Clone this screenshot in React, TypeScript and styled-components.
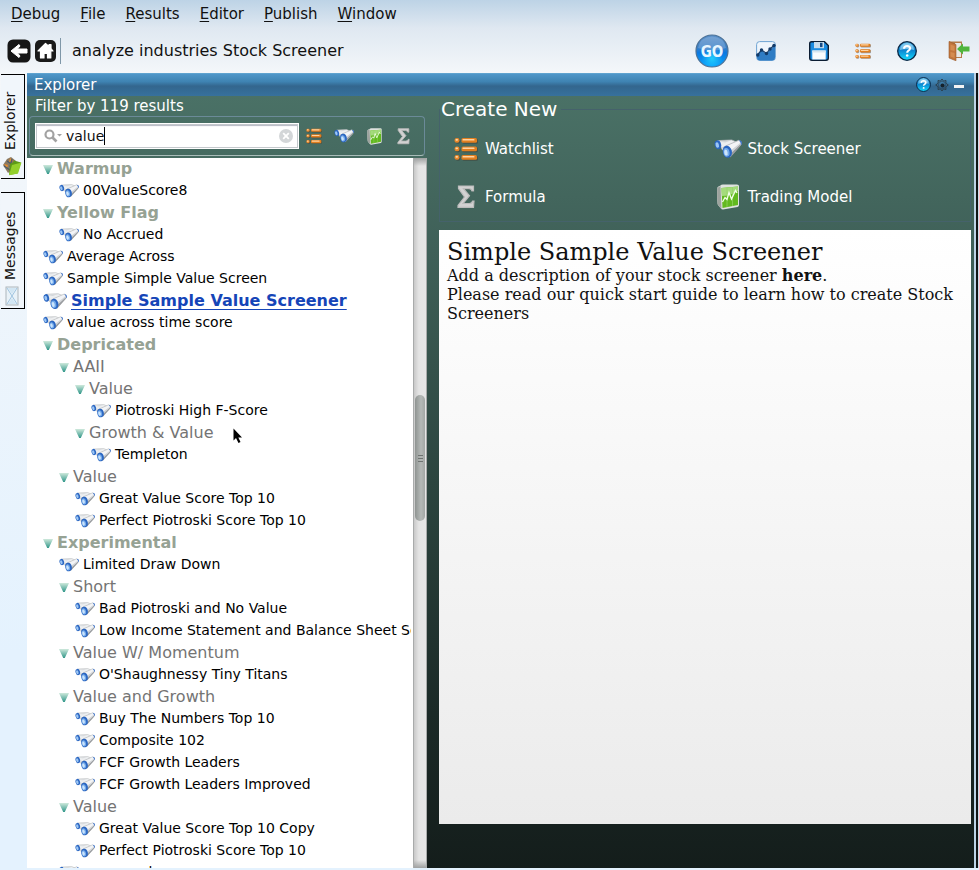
import React, { useState } from "react";
import styled, { createGlobalStyle, css } from "styled-components";

const GlobalStyle = createGlobalStyle`
  *, *::before, *::after { box-sizing: border-box; }
  html, body, #root { height: 100%; margin: 0; }
  body { font-family: "DejaVu Sans", sans-serif; font-size: 14px; color: #111; overflow: hidden; }
  button, input { font: inherit; color: inherit; }
`;

/* ---------- icons ---------- */

const Binoculars = ({ size = 20 }: { size?: number }) => (
  <svg width={size} height={Math.round(size * 0.7)} viewBox="0 0 30 21" aria-hidden="true">
    <path d="M4 1.500 L19 .8 L24 3 L9 11.500 Z" fill="#eceef0" stroke="#b4b7ba" strokeWidth=".8" />
    <path d="M9 8.500 L22 3.500 L24 4.500 L10 12 Z" fill="#b4b7ba" />
    <path d="M5 2.500 L18 1.500 L12 3.500Z" fill="#d3d6d9" />
    <ellipse cx="4.200" cy="6" rx="3.400" ry="4.800" transform="rotate(-14 4.200 6)" fill="#2a66c2" />
    <ellipse cx="3.500" cy="6.300" rx="1.800" ry="3" transform="rotate(-14 3.500 6.300)" fill="#9cc6f4" />
    <path d="M12 7.500 L26.500 1.200 Q30 1.800 29 6 L17 19 Z" fill="#f3f4f6" stroke="#b0b3b6" strokeWidth=".8" />
    <path d="M17.500 15 L28.500 5 L28.500 7 L17.500 19.500 Z" fill="#999c9f" />
    <path d="M17.500 12.500 L28 4 L28.500 5.200 L18 15 Z" fill="#d0d3d6" />
    <path d="M26.500 1 Q31 1.200 29.500 6 L28.700 6.500 Q29.400 3.500 26.500 1Z" fill="#3a72cc" />
    <ellipse cx="14.300" cy="13.500" rx="4.900" ry="6.500" transform="rotate(-12 14.300 13.500)" fill="#2a66c2" />
    <ellipse cx="13.400" cy="14" rx="3.200" ry="4.700" transform="rotate(-12 13.400 14)" fill="#74aaea" />
    <ellipse cx="12.800" cy="14.300" rx="1.800" ry="3.200" transform="rotate(-12 12.800 14.300)" fill="#cbe4fb" />
  </svg>
);

const ListIcon = ({ size = 16 }: { size?: number }) => (
  <svg width={size} height={size} viewBox="0 0 24 24" aria-hidden="true">
    {[1, 9.5, 18].map((y) => (
      <g key={y}>
        <rect x="1.500" y={y + 0.8} width="5" height="5" rx="2.200" fill="#40342a" opacity=".45" />
        <rect x="8.500" y={y + 0.8} width="15.500" height="5" rx="1.500" fill="#40342a" opacity=".45" />
        <rect x="0.500" y={y} width="5" height="4.800" rx="2.200" fill="#e8862a" />
        <rect x="7.500" y={y} width="15.500" height="4.800" rx="1.500" fill="#e17f20" />
        <rect x="1.500" y={y + 0.9} width="2.500" height="1.800" rx=".9" fill="#ffd9a4" />
        <rect x="8.500" y={y + 0.9} width="12" height="1.700" rx=".7" fill="#ffd3a0" />
      </g>
    ))}
  </svg>
);

const SigmaIcon = ({ size = 16 }: { size?: number }) => (
  <svg width={size} height={size} viewBox="0 0 24 24" aria-hidden="true">
    <path d="M5 2 H20 V7 H18.500 Q18 4.500 15.500 4.500 H9.500 L15.500 11.500 L9 19.500 H16 Q18.500 19.500 19.200 17 H20.500 L19.500 23 H4.500 V21 L11.500 12.800 L5 4.500 Z" fill="#33433e" opacity=".5" />
    <path d="M4.500 1 H19.500 V6 H18 Q17.500 3.700 15 3.700 H9.500 L15.500 10.800 L9 18.500 H15.500 Q18 18.500 18.700 16 H20 L19.500 22.300 H4 V20.500 L10.500 12 L4.500 3.500 Z" fill="#d2d2d2" stroke="#bcbcbc" strokeWidth="1.200" />
  </svg>
);

const ModelIcon = ({ size = 18 }: { size?: number }) => (
  <svg width={size} height={size} viewBox="0 0 24 26" aria-hidden="true">
    <path d="M4.500 1.500 Q5 .5 7 .5 L21 .5 Q23 .5 23 2 V21 Q23 22.500 21.500 23 L7 25.500 Q5.500 25.500 4.500 24 L2 21 Q1 20 1.200 4 Q1.200 2.500 4.500 1.500Z" fill="#dfe2df" />
    <path d="M1.200 4 L4.500 2 L5.500 25 L2 21 Q1 20 1.200 4Z" fill="#9da39e" />
    <path d="M5.500 4 L22 2.500 V21 L6.500 24 Z" fill="#62b91f" />
    <path d="M5.500 4 L22 2.500 V7 Q14 12 5.800 12Z" fill="#a4db7c" />
    <path d="M11 3.500V23 M16.500 3V22" stroke="#95d568" strokeWidth=".7" />
    <path d="M6.500 18 L9 13.500 L11 15.500 L13 8.500 L15.500 15 L19.500 6.500 L21 9" fill="none" stroke="#f2ffe8" strokeWidth="1.300" />
  </svg>
);

const HelpIcon = ({ size = 20 }: { size?: number }) => (
  <svg width={size} height={size} viewBox="0 0 20 20" aria-hidden="true">
    <defs>
      <linearGradient id="helpFill" x1="0" y1="0" x2="0" y2="1">
        <stop offset="0" stopColor="#59bdee" />
        <stop offset="0.45" stopColor="#0d84cf" />
        <stop offset="1" stopColor="#12dcff" />
      </linearGradient>
    </defs>
    <circle cx="10" cy="10" r="9.300" fill="url(#helpFill)" stroke="#0b2745" strokeWidth="1.300" />
    <path d="M2.800 9 Q3.500 2.500 10 2 Q16.500 2.500 17.200 9 Q10 7 2.800 9Z" fill="#b9e3f8" opacity=".55" />
    <path d="M7 7.800 Q7.200 5 10.100 5 Q13.100 5.100 13.100 7.500 Q13 9 11.200 9.800 Q10.200 10.400 10.200 11.800" fill="none" stroke="#fff" strokeWidth="2.100" />
    <circle cx="10.200" cy="14.500" r="1.300" fill="#fff" />
  </svg>
);

const GoIcon = () => (
  <svg width="34" height="34" viewBox="0 0 34 34" aria-hidden="true">
    <defs>
      <linearGradient id="goFill" x1="0" y1="0" x2="0" y2="1">
        <stop offset="0" stopColor="#5a8fc8" />
        <stop offset="0.4" stopColor="#3a7fc6" />
        <stop offset="0.55" stopColor="#0b78e0" />
        <stop offset="1" stopColor="#0aa6ff" />
      </linearGradient>
      <radialGradient id="goGlow" cx="0.5" cy="0.75" r="0.35">
        <stop offset="0" stopColor="#22d4ff" stopOpacity=".9" />
        <stop offset="1" stopColor="#22d4ff" stopOpacity="0" />
      </radialGradient>
    </defs>
    <circle cx="17" cy="17" r="16" fill="url(#goFill)" stroke="#4c7196" strokeWidth="1.200" />
    <circle cx="17" cy="17" r="15" fill="url(#goGlow)" />
    <path d="M3 14 Q5 3 17 2.500 Q29 3 31 14 Q17 19 3 14Z" fill="#fff" opacity=".18" />
    <text x="17" y="23" textAnchor="middle" fontFamily="DejaVu Sans Condensed, DejaVu Sans, sans-serif" fontWeight="700" fontSize="15" fill="#e8f6ff">GO</text>
  </svg>
);

const LineChartIcon = () => (
  <svg width="20" height="20" viewBox="0 0 20 20" aria-hidden="true">
    <rect x=".6" y=".6" width="18.800" height="18.800" rx="3" fill="#eef5fc" stroke="#6ea3d2" />
    <path d="M1 14 L5.500 9 L10 13 L18.500 4.500 L19 5 V17 Q19 19.400 16.500 19.400 H3.500 Q1 19.400 1 17Z" fill="#2f7cc4" />
    <path d="M1 14.500 L5.500 9 L10.500 12.500 L14 8 L18.500 4" fill="none" stroke="#173e6c" strokeWidth="1.200" />
    {[[5.5, 9], [10.5, 12.5], [14, 8], [18, 4.5], [1.8, 14]].map(([x, y]) => (
      <circle key={x} cx={x} cy={y} r="1.700" fill="#123a68" />
    ))}
  </svg>
);

const SaveIcon = () => (
  <svg width="20" height="20" viewBox="0 0 20 20" aria-hidden="true">
    <path d="M2.500 .7 H15.500 L19.300 4.500 V17 Q19.300 19.300 17 19.300 H3 Q.7 19.300 .7 17 V2.700 Q.7 .7 2.500 .7Z" fill="#1a8be0" stroke="#0b1d33" strokeWidth="1.400" />
    <rect x="5" y="1" width="10" height="6.200" fill="#c6dcec" />
    <rect x="11" y="1.800" width="2.500" height="4.300" fill="#174a83" />
    <rect x="3.300" y="9.500" width="13.400" height="9" fill="#f8fbfd" />
    <path d="M3.300 9.500 H16.700 V11.500 H3.300Z" fill="#d5e4ee" />
  </svg>
);

const ExitIcon = () => (
  <svg width="22" height="20" viewBox="0 0 22 20" aria-hidden="true">
    <path d="M1 .5 H14 V17 H1Z" fill="#b47b49" />
    <path d="M7 2 H13 V16 H7Z" fill="#e8e8e4" />
    <path d="M1 .5 L8 3.500 V19.800 L1 17Z" fill="#c2763c" stroke="#9a5a2b" strokeWidth=".6" />
    <path d="M2.500 3.500 L6.500 5 V10 L2.500 9Z M2.500 11 L6.500 12 V17 L2.500 15.500Z" fill="#d48c50" />
    <path d="M9 8 L15 2.500 V5.500 H21.500 V10.500 H15 V13.500Z" fill="#4fb53c" />
  </svg>
);

const BackIcon = () => (
  <svg width="24" height="24" viewBox="0 0 24 24" aria-hidden="true">
    <rect x=".5" y=".5" width="23" height="23" rx="5.500" fill="#161616" />
    <path d="M4 12 L12 5.500 L13 7 L10.500 10 H20 V14 H10.500 L13 17 L12 18.500Z" fill="#fff" stroke="#fff" strokeLinejoin="round" />
  </svg>
);

const HomeIcon = () => (
  <svg width="21" height="22" viewBox="0 0 21 22" aria-hidden="true">
    <rect width="21" height="22" rx="5" fill="#1a1a1a" />
    <path d="M10.500 3.500 L14 6.500 V4.500 H16 V8.500 L18 11 H15.800 V18 H12.500 V13.500 H9 V18 H5.500 V11 H3Z" fill="#fff" stroke="#fff" strokeLinejoin="round" strokeWidth="1.200" />
  </svg>
);

const GearIcon = () => (
  <svg width="14" height="14" viewBox="0 0 14 14" aria-hidden="true">
    <path d="M7 1 L8.500 3.200 L11 2.500 L10.800 5.200 L13.300 7 L10.800 8.800 L11 11.500 L8.500 10.800 L7 13 L5.500 10.800 L3 11.500 L3.200 8.800 L.7 7 L3.200 5.200 L3 2.500 L5.500 3.200Z" fill="none" stroke="#2b3f4c" strokeWidth="1" />
    <circle cx="7" cy="7" r="3.600" fill="none" stroke="#2d4150" strokeWidth=".6" />
    <circle cx="7.500" cy="7.500" r="2" fill="#16222b" />
  </svg>
);

const Triangle = () => (
  <svg width="10" height="9" viewBox="0 0 10 9" aria-hidden="true">
    <defs>
      <linearGradient id="tri" x1="0" y1="0" x2="0" y2="1">
        <stop offset="0" stopColor="#cfe9dc" />
        <stop offset="1" stopColor="#2f9688" />
      </linearGradient>
    </defs>
    <path d="M0 0 H10 L5.800 9 H4.200Z" fill="url(#tri)" />
  </svg>
);

const SearchIcon = () => (
  <svg width="19" height="14" viewBox="0 0 19 14" aria-hidden="true">
    <circle cx="5.500" cy="5.500" r="4" fill="none" stroke="#a2a2a2" strokeWidth="2.200" />
    <path d="M8.500 8.500 L12.500 12.500" stroke="#a2a2a2" strokeWidth="2.600" />
    <path d="M13 5 H18 L15.500 7.500Z" fill="#a2a2a2" />
  </svg>
);

const ClearIcon = () => (
  <svg width="14" height="14" viewBox="0 0 14 14" aria-hidden="true">
    <circle cx="7" cy="7" r="7" fill="#d3d6d8" />
    <path d="M4.200 4.200 L9.800 9.800 M9.800 4.200 L4.200 9.800" stroke="#fff" strokeWidth="1.800" />
  </svg>
);

const ExplorerTabIcon = () => (
  <svg width="20" height="20" viewBox="0 0 20 20" aria-hidden="true">
    <path d="M1 9 L5 3 L9 1 L14 5 L12 12 L6 17Z" fill="#8b7a62" />
    <path d="M2 8 L6 9 L5 12Z M8 2 L11 5 L7 6Z" fill="#e98c2c" />
    <path d="M5 5 L9 8 M2 10 L8 14 M10 3 L8 11" stroke="#4f5d68" strokeWidth="1.300" />
    <path d="M8 8 Q9 6.500 11 6.500 L12 4.500 L19 6.500 L15.500 17.500 L7 19Z" fill="#5d9a18" />
    <path d="M10 9 L19.500 6.500 L16 17.500 L7 19.200Z" fill="#93d02c" />
  </svg>
);

const MessagesTabIcon = () => (
  <svg width="14" height="20" viewBox="0 0 14 20" aria-hidden="true">
    <rect x="1" y="1" width="12" height="18" fill="#e9f2f8" stroke="#aeb6bb" />
    <path d="M2 2 L7 10 L2 18 M12 2 L7 10 L12 18" fill="none" stroke="#9fc4e0" />
    <path d="M3 2 H11 L7 8Z M3 18 H11 L7 12Z" fill="#d2e6f3" />
  </svg>
);

const Pointer = () => (
  <svg width="10" height="16" viewBox="0 0 10 16" aria-hidden="true">
    <path d="M.5 .5 V12.500 L3 10 L5.500 15 L7.500 14 L5.300 9.500 H9Z" fill="#000" />
  </svg>
);

/* ---------- window frame ---------- */

const Window = styled.div`
  display: grid;
  grid-template-rows: 28px 45px minmax(0, 1fr) 2px;
  height: 100vh;
  background: linear-gradient(#bdd3e6 0, #dfe8f1 28px, #f4f7fa 73px, #e4f2fe 75%);
`;

const MenuBar = styled.nav`
  display: flex;
  align-items: center;
  gap: 20px;
  padding-left: 11px;
`;

const MenuItem = styled.button`
  padding: 0;
  border: 0;
  background: none;
  font-size: 15px;
  line-height: 20px;
  &::first-letter { text-decoration: underline; text-underline-offset: 2px; }
`;

const Toolbar = styled.header`
  display: flex;
  align-items: center;
  gap: 4px;
  padding: 0 9px 0 7px;
`;

const Location = styled.h1`
  flex: 1;
  margin: 0;
  padding-left: 11px;
  font-size: 16px;
  font-weight: 400;
  line-height: 26px;
  border-left: 1px solid #7f97a8;
`;

const IconButton = styled.button`
  display: flex;
  align-items: center;
  justify-content: center;
  padding: 0;
  border: 0;
  background: none;
`;

const Actions = styled.div`
  display: flex;
  align-items: center;
  gap: 26px;
`;

const RunGroup = styled.div`
  display: flex;
  align-items: center;
  gap: 33px;
  margin-left: 1px;
`;

const Exit = styled(IconButton)`
  margin-left: 5px;
`;

const Body = styled.div`
  display: grid;
  grid-template-columns: 27px minmax(0, 1fr) 5px;
  min-height: 0;
`;

const Tabs = styled.div`
  display: flex;
  flex-direction: column;
  align-items: flex-start;
  gap: 13px;
  padding: 1px 0 0 1px;
`;

const SideTab = styled.button<{ $height: number }>`
  display: flex;
  align-items: center;
  gap: 6px;
  width: 24px;
  height: ${(p) => p.$height}px;
  padding: 2px 0;
  border: 1px solid #000;
  border-right: 0;
  background: #f1f6fb;
  writing-mode: vertical-rl;
  transform: rotate(180deg);
  font-size: 14px;
  svg { transform: rotate(180deg); flex: none; }
`;

const TabLabel = styled.span`
  padding-left: 6px;
`;

const WindowEdge = styled.div`
  border-left: 2px solid #bcd3e6;
  border-right: 1px solid #cddceb;
  background: #101414;
`;

const Panel = styled.main`
  display: grid;
  grid-template-rows: 23px minmax(0, 1fr);
  min-height: 0;
`;

const TitleBar = styled.div`
  display: flex;
  align-items: center;
  gap: 4px;
  padding: 0 10px 1px 7px;
  background: linear-gradient(#4f97c9, #3f83b2 35%, #33668e 55%, #37719d);
  border-top: 1px solid #5fa3cf;
  color: #fff;
`;

const Title = styled.h2`
  flex: 1;
  margin: 0;
  font-size: 15px;
  font-weight: 400;
`;

const Minimize = styled.button`
  width: 10px;
  height: 3px;
  margin: 4px 0 0 1px;
  padding: 0;
  border: 0;
  background: #f3f3f3;
`;

const Content = styled.div`
  display: grid;
  grid-template-columns: 400px minmax(0, 1fr);
  min-height: 0;
  background: linear-gradient(#4a7166, #3f6058 20%, #2c453f 50%, #1b2a27 80%, #141d1b);
`;

/* ---------- explorer ---------- */

const Explorer = styled.section`
  display: grid;
  grid-template-rows: 20px 42px minmax(0, 1fr);
  min-height: 0;
`;

const ResultCount = styled.div`
  padding-left: 8px;
  font-size: 15px;
  line-height: 20px;
  color: #fff;
`;

const FilterBar = styled.div`
  display: flex;
  align-items: center;
  gap: 7px;
  height: 40px;
  margin: 0 2px;
  padding: 0 12px 0 5px;
  border: 1px solid #6b8a98;
  border-bottom-color: #a9bcb9;
  border-radius: 4px;
`;

const FilterButtons = styled.div`
  display: flex;
  flex: 1;
  align-items: center;
  justify-content: space-between;
`;

const SearchBox = styled.label`
  display: flex;
  align-items: center;
  gap: 3px;
  width: 264px;
  height: 26px;
  padding: 0 5px 0 8px;
  background: #fff;
  border: 1px solid #fff;
  box-shadow: inset 0 0 0 1px #c4c8cc, inset 0 2px 1px #b6b9c4;
`;

const Field = styled.span`
  display: flex;
  flex: 1;
  align-items: center;
  min-width: 0;
`;

const SearchInput = styled.input`
  field-sizing: content;
  min-width: 1px;
  max-width: 100%;
  padding: 0;
  border: 0;
  outline: 0;
  background: transparent;
  caret-color: transparent;
  font-size: 14px;
`;

const Caret = styled.span`
  width: 1px;
  height: 18px;
  background: #000;
`;

const TreeArea = styled.div`
  display: grid;
  grid-template-columns: minmax(0, 1fr) 14px;
  min-height: 0;
  background: #fff;
`;

const Tree = styled.ul`
  margin: 0;
  padding: 0 2px 0 16px;
  list-style: none;
  overflow: hidden;
`;

const Row = styled.li<{ $level: number }>`
  display: flex;
  align-items: center;
  gap: 4px;
  height: 22px;
  padding-left: ${(p) => p.$level * 16}px;
  overflow: hidden;
  white-space: nowrap;
  svg { flex: none; }
`;

const labelStyles = {
  group: css`font-size: 16px; font-weight: 700; color: #96a294;`,
  folder: css`font-size: 16px; color: #747474;`,
  item: css`align-self: flex-start; font-size: 14px; line-height: 20px; color: #000;`,
  selected: css`
    font-size: 16px; font-weight: 700; color: #1545b8;
    text-decoration: underline; text-underline-offset: 3px;
  `,
};

const RowLabel = styled.a<{ $kind: Kind }>`
  line-height: 22px;
  text-decoration: none;
  ${(p) => labelStyles[p.$kind]}
`;

const ScrollTrack = styled.div`
  display: grid;
  grid-template-rows: 237fr 126px 347fr;
  padding: 0 1px;
  border: 1px solid #a9abab;
  border-width: 0 1px 0 1px;
  background:
    linear-gradient(#9fa1a1, rgba(200, 200, 200, 0) 8px),
    linear-gradient(0deg, #9fa1a1, rgba(200, 200, 200, 0) 8px),
    linear-gradient(90deg, #c9c9c9, #e4e4e4 40%, #e6e6e6);
`;

const Thumb = styled.div`
  display: flex;
  flex-direction: column;
  align-items: center;
  justify-content: center;
  gap: 2px;
  grid-row: 2;
  border-radius: 5px;
  background: linear-gradient(90deg, #8f9492, #b5b9b7 60%, #a3a7a5);
`;

const Grip = styled.span`
  width: 5px;
  height: 1px;
  background: #6f7472;
`;

const MousePointer = styled.div`
  position: absolute;
  left: 233px;
  top: 428px;
  line-height: 0;
  pointer-events: none;
`;

/* ---------- right side ---------- */

const Details = styled.section`
  display: grid;
  grid-template-rows: auto minmax(0, 1fr);
  gap: 8px;
  min-height: 0;
  padding: 0 3px 44px 12px;
`;

const CreateNew = styled.fieldset`
  min-width: 0;
  margin: 0;
  padding: 3px 0 0;
  border: 1px solid #45626b;
  color: #fff;
`;

const Legend = styled.legend`
  padding: 0 4px 0 1px;
  font-size: 20px;
  line-height: 26px;
`;

const CreateGrid = styled.div`
  display: grid;
  grid-template-columns: 1fr 1fr;
  grid-auto-rows: 48px;
  align-items: center;
  column-gap: 4px;
  padding-left: 13px;
`;

const CreateButton = styled.button`
  display: flex;
  align-items: center;
  gap: 6px;
  padding: 0;
  border: 0;
  background: none;
  font-size: 15px;
`;

const IconSlot = styled.span<{ $wide?: boolean }>`
  display: flex;
  justify-content: center;
  width: ${(p) => (p.$wide ? 28 : 26)}px;
`;

const Preview = styled.article`
  padding: 8px;
  background: linear-gradient(#fff, #ebebeb);
  font-family: "DejaVu Serif", serif;
  font-size: 16px;
  line-height: 19px;
`;

const PreviewTitle = styled.h3`
  margin: 0;
  font-size: 24px;
  font-weight: 400;
  line-height: 28px;
`;

const Paragraph = styled.p`
  margin: 0;
`;

type Kind = "group" | "folder" | "item" | "selected";
type Node = [kind: Kind, level: number, label: string];

const nodes: Node[] = [
  ["group", 0, "Warmup"],
  ["item", 1, "00ValueScore8"],
  ["group", 0, "Yellow Flag"],
  ["item", 1, "No Accrued"],
  ["item", 0, "Average Across"],
  ["item", 0, "Sample Simple Value Screen"],
  ["selected", 0, "Simple Sample Value Screener"],
  ["item", 0, "value across time score"],
  ["group", 0, "Depricated"],
  ["folder", 1, "AAII"],
  ["folder", 2, "Value"],
  ["item", 3, "Piotroski High F-Score"],
  ["folder", 2, "Growth & Value"],
  ["item", 3, "Templeton"],
  ["folder", 1, "Value"],
  ["item", 2, "Great Value Score Top 10"],
  ["item", 2, "Perfect Piotroski Score Top 10"],
  ["group", 0, "Experimental"],
  ["item", 1, "Limited Draw Down"],
  ["folder", 1, "Short"],
  ["item", 2, "Bad Piotroski and No Value"],
  ["item", 2, "Low Income Statement and Balance Sheet Score"],
  ["folder", 1, "Value W/ Momentum"],
  ["item", 2, "O'Shaughnessy Tiny Titans"],
  ["folder", 1, "Value and Growth"],
  ["item", 2, "Buy The Numbers Top 10"],
  ["item", 2, "Composite 102"],
  ["item", 2, "FCF Growth Leaders"],
  ["item", 2, "FCF Growth Leaders Improved"],
  ["folder", 1, "Value"],
  ["item", 2, "Great Value Score Top 10 Copy"],
  ["item", 2, "Perfect Piotroski Score Top 10"],
  ["item", 1, "common low"],
];

const menus = ["Debug", "File", "Results", "Editor", "Publish", "Window"];

const TreeRow = ({ node: [kind, level, label] }: { node: Node }) => {
  const branch = kind === "group" || kind === "folder";
  return (
    <Row $level={level}>
      {branch ? <Triangle /> : <Binoculars size={kind === "selected" ? 24 : 20} />}
      <RowLabel as={branch ? "span" : "a"} href={branch ? undefined : "#"} $kind={kind}>
        {label}
      </RowLabel>
    </Row>
  );
};

export default function App() {
  const [query, setQuery] = useState("value");
  return (
    <Window>
      <GlobalStyle />
      <MenuBar>
        {menus.map((m) => <MenuItem key={m}>{m}</MenuItem>)}
      </MenuBar>
      <Toolbar>
        <IconButton aria-label="Back"><BackIcon /></IconButton>
        <IconButton aria-label="Home"><HomeIcon /></IconButton>
        <Location>analyze industries Stock Screener</Location>
        <Actions>
          <IconButton aria-label="Go"><GoIcon /></IconButton>
          <RunGroup>
            <IconButton aria-label="Chart"><LineChartIcon /></IconButton>
            <IconButton aria-label="Save"><SaveIcon /></IconButton>
          </RunGroup>
          <IconButton aria-label="Watchlist"><ListIcon size={16} /></IconButton>
          <IconButton aria-label="Help"><HelpIcon /></IconButton>
          <Exit aria-label="Exit"><ExitIcon /></Exit>
        </Actions>
      </Toolbar>
      <Body>
        <Tabs>
          <SideTab $height={105}><ExplorerTabIcon /><TabLabel>Explorer</TabLabel></SideTab>
          <SideTab $height={117}><MessagesTabIcon /><TabLabel>Messages</TabLabel></SideTab>
        </Tabs>
        <Panel>
          <TitleBar>
            <Title>Explorer</Title>
            <IconButton aria-label="Explorer help"><HelpIcon size={15} /></IconButton>
            <IconButton aria-label="Settings"><GearIcon /></IconButton>
            <Minimize aria-label="Minimize" />
          </TitleBar>
          <Content>
            <Explorer>
              <ResultCount>Filter by 119 results</ResultCount>
              <FilterBar>
                <SearchBox>
                  <SearchIcon />
                  <Field>
                    <SearchInput aria-label="Filter" value={query} onChange={(e) => setQuery(e.target.value)} />
                    <Caret />
                  </Field>
                  <IconButton aria-label="Clear" onClick={() => setQuery("")}><ClearIcon /></IconButton>
                </SearchBox>
                <FilterButtons>
                  <IconButton aria-label="Watchlists"><ListIcon size={16} /></IconButton>
                  <IconButton aria-label="Screeners"><Binoculars size={20} /></IconButton>
                  <IconButton aria-label="Models"><ModelIcon size={17} /></IconButton>
                  <IconButton aria-label="Formulas"><SigmaIcon size={17} /></IconButton>
                </FilterButtons>
              </FilterBar>
              <TreeArea>
                <Tree>
                  {nodes.map((n, i) => <TreeRow key={i} node={n} />)}
                </Tree>
                <ScrollTrack>
                  <Thumb><Grip /><Grip /><Grip /></Thumb>
                </ScrollTrack>
              </TreeArea>
            </Explorer>
            <Details>
              <CreateNew>
                <Legend>Create New</Legend>
                <CreateGrid>
                  <CreateButton><IconSlot><ListIcon size={24} /></IconSlot>Watchlist</CreateButton>
                  <CreateButton><IconSlot $wide><Binoculars size={28} /></IconSlot>Stock Screener</CreateButton>
                  <CreateButton><IconSlot><SigmaIcon size={24} /></IconSlot>Formula</CreateButton>
                  <CreateButton><IconSlot $wide><ModelIcon size={26} /></IconSlot>Trading Model</CreateButton>
                </CreateGrid>
              </CreateNew>
              <Preview>
                <PreviewTitle>Simple Sample Value Screener</PreviewTitle>
                <Paragraph>Add a description of your stock screener <b>here</b>.</Paragraph>
                <Paragraph>Please read our quick start guide to learn how to create Stock Screeners</Paragraph>
              </Preview>
            </Details>
          </Content>
        </Panel>
        <WindowEdge />
      </Body>
      <MousePointer><Pointer /></MousePointer>
    </Window>
  );
}
